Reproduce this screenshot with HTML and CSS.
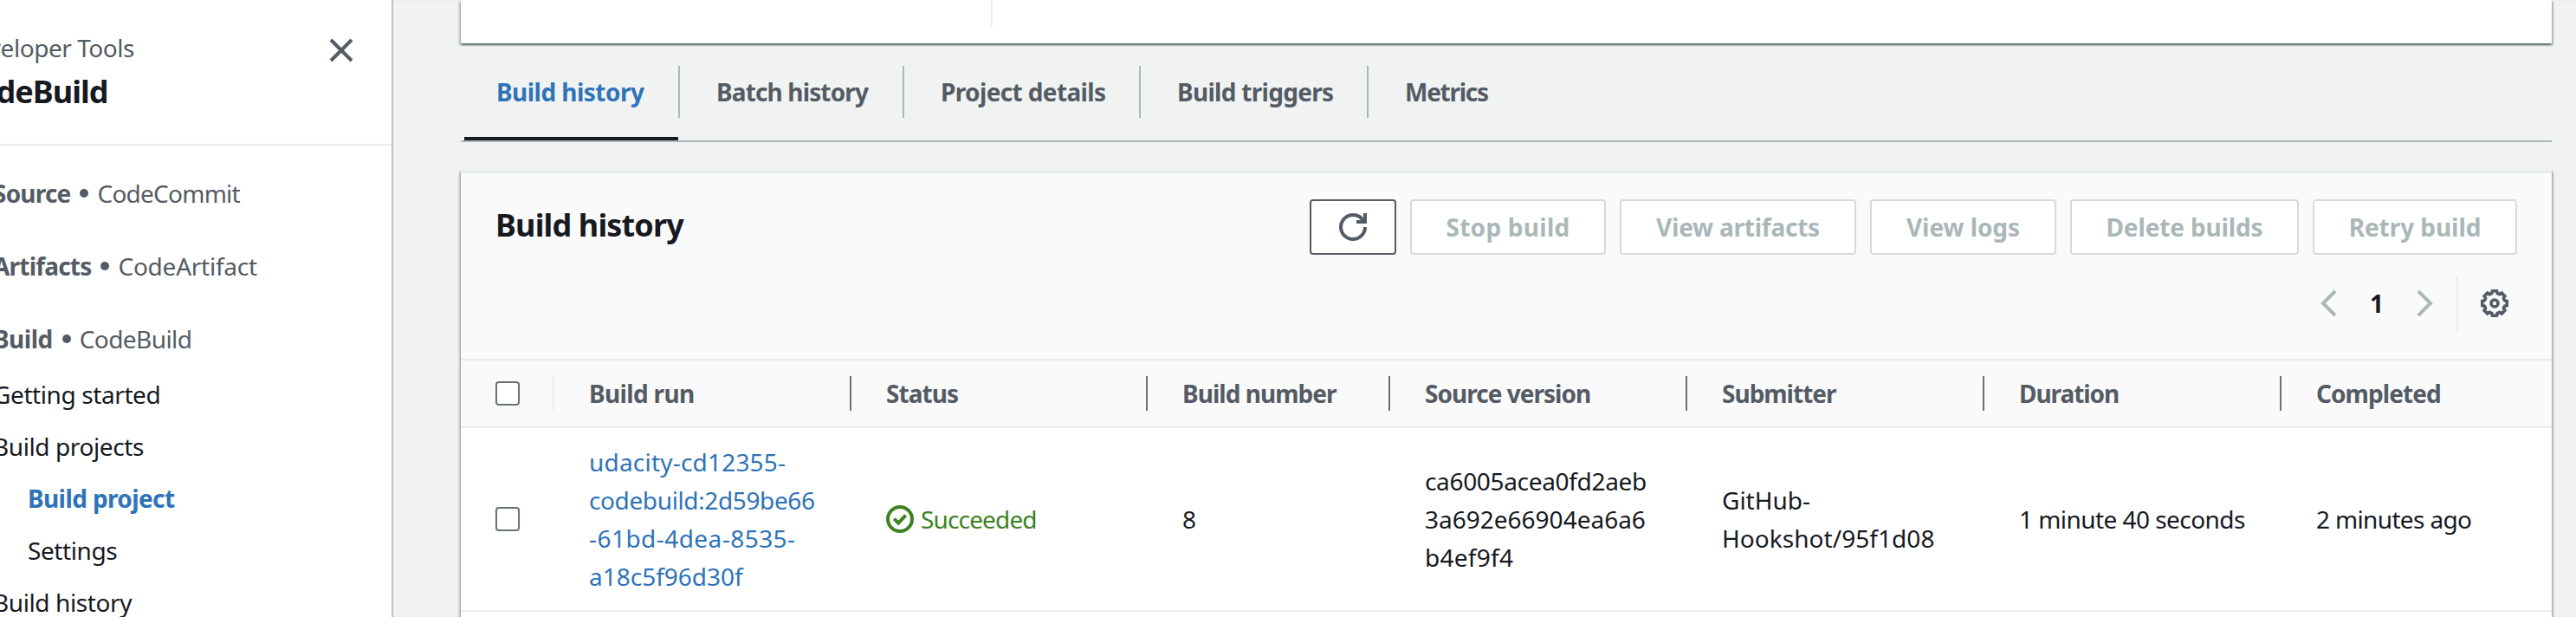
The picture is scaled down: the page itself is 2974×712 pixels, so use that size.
FILE: index.html
```html
<!DOCTYPE html>
<html lang="en">
<head>
<meta charset="utf-8">
<title>CodeBuild - Build history</title>
<link rel="stylesheet" href="styles.css">
</head>
<body>
<aside class="sidebar">
  <header class="side-head">
    <div class="side-titles">
      <p class="eyebrow">Developer Tools</p>
      <h1 class="service">CodeBuild</h1>
    </div>
    <svg class="close" viewBox="0 0 28 28"><path d="M2 2l24 24M26 2L2 26"/></svg>
  </header>
  <nav class="nav">
    <a class="section"><b>Source</b><i class="dot"></i><span class="sub-commit">CodeCommit</span></a>
    <a class="section"><b>Artifacts</b><i class="dot"></i><span class="sub-artifact">CodeArtifact</span></a>
    <a class="section"><b>Build</b><i class="dot"></i><span class="sub-build">CodeBuild</span></a>
    <a class="item">Getting started</a>
    <a class="item">Build projects</a>
    <a class="item nested active">Build project</a>
    <a class="item nested">Settings</a>
    <a class="item">Build history</a>
  </nav>
</aside>
<main class="main">
  <section class="summary"><div class="summary-col"></div></section>
  <nav class="tabs">
    <a class="tab tab-build selected"><span>Build history</span></a>
    <a class="tab tab-batch"><span>Batch history</span></a>
    <a class="tab tab-details"><span>Project details</span></a>
    <a class="tab tab-triggers"><span>Build triggers</span></a>
    <a class="tab tab-metrics"><span>Metrics</span></a>
  </nav>
  <section class="panel">
    <header class="panel-head">
      <div class="title-row">
        <h2 class="title">Build history</h2>
        <div class="actions">
          <button class="btn refresh"><svg class="icon" viewBox="0 0 16 16"><path d="M15 8c0 3.87-3.13 7-7 7s-7-3.13-7-7 3.13-7 7-7c2.79 0 5.2 1.64 6.3 4M15 0v5h-5"/></svg></button>
          <button class="btn stop">Stop build</button>
          <button class="btn artifacts">View artifacts</button>
          <button class="btn logs">View logs</button>
          <button class="btn delete">Delete builds</button>
          <button class="btn retry">Retry build</button>
        </div>
      </div>
      <div class="pager">
        <svg class="icon chevron" viewBox="0 0 16 16"><path d="M12 1L5 8l7 7"/></svg>
        <span class="page">1</span>
        <svg class="icon chevron" viewBox="0 0 16 16"><path d="M4 1l7 7-7 7"/></svg>
        <div class="settings">
          <svg class="icon gear" viewBox="0 0 32 32"><path d="M30.300 13.500V18.500L27.600 19.200 26.400 21.900 27.900 24.300 24.300 27.900 21.900 26.400 19.200 27.600 18.500 30.300H13.500L12.800 27.600 10.100 26.400 7.700 27.900 4.100 24.300 5.600 21.900 4.400 19.200 1.700 18.500V13.500L4.400 12.800 5.600 10.100 4.100 7.700 7.700 4.100 10.100 5.600 12.800 4.400 13.500 1.700H18.500L19.200 4.400 21.900 5.600 24.300 4.100 27.900 7.700 26.400 10.100 27.600 12.800z"/><circle cx="16" cy="16" r="4"/></svg>
        </div>
      </div>
    </header>
    <div class="row head">
      <div class="cell check"><span class="box"></span></div>
      <div class="cell h-run">Build run</div>
      <div class="cell h-status">Status</div>
      <div class="cell h-number">Build number</div>
      <div class="cell h-source">Source version</div>
      <div class="cell h-submitter">Submitter</div>
      <div class="cell h-duration">Duration</div>
      <div class="cell h-completed">Completed</div>
    </div>
    <div class="row body">
      <div class="cell check"><span class="box"></span></div>
      <div class="cell run"><a><span class="run-a">udacity-cd12355-</span><br><span class="run-b">codebuild:2d59be66</span><br><span class="run-c">-61bd-4dea-8535-</span><br>a18c5f96d30f</a></div>
      <div class="cell status"><svg class="icon" viewBox="0 0 16 16"><circle cx="8" cy="8" r="7"/><path d="M4.600 7.800l2.500 2.500 4.200-4.500"/></svg><span>Succeeded</span></div>
      <div class="cell">8</div>
      <div class="cell"><div><span class="src-a">ca6005acea0fd2aeb</span><br>3a692e66904ea6a6<br><span class="src-c">b4ef9f4</span></div></div>
      <div class="cell"><div>GitHub-<br><span class="hook">Hookshot/95f1d08</span></div></div>
      <div class="cell duration">1 minute 40 seconds</div>
      <div class="cell completed">2 minutes ago</div>
    </div>
  </section>
</main>
</body>
</html>
```
FILE: styles.css
```css
* { box-sizing: border-box; }
html { overflow: hidden; }
body {
  margin: 0;
  display: flex;
  width: 2974px;
  height: 712px;
  overflow: hidden;
  background: #f1f3f3;
  color: #16191f;
  font: 28px/44px "Noto Sans", "Open Sans", sans-serif;
}
p, h1, h2 { margin: 0; }
svg { fill: none; flex: none; }
.icon { width: 32px; height: 32px; stroke: #545b64; stroke-width: 2; }

/* Side navigation */
.sidebar {
  flex: none;
  width: 452px;
  height: 712px;
  background: #fff;
  overflow: hidden;
}
.sidebar + .main { box-shadow: inset 2px 0 1px #b9c0c3; }
.side-head {
  display: flex;
  justify-content: space-between;
  height: 168px;
  padding: 33px 44px 0 0;
  border-bottom: 2px solid #eaeded;
}
.side-titles { margin-left: -48px; white-space: nowrap; }
.eyebrow { color: #545b64; letter-spacing: -.45px; }
.service { margin-top: 7px; font-size: 36px; line-height: 44px; letter-spacing: -1px; }
.close { width: 28px; height: 28px; margin-top: 11px; stroke: #545b64; stroke-width: 4; }
.nav {
  display: flex;
  flex-direction: column;
  padding-top: 33px;
  margin-left: -8px;
  white-space: nowrap;
}
.section {
  display: flex;
  align-items: center;
  margin-bottom: 40px;
  color: #545b64;
}
.section b { letter-spacing: -.8px; }
.section:nth-child(3) { margin-bottom: 20px; }
.section:nth-child(3) b { letter-spacing: -.5px; }
.dot { width: 10px; height: 10px; margin: 0 10px 0 11px; border-radius: 50%; background: #545b64; }
.sub-commit { letter-spacing: -.75px; }
.sub-artifact { letter-spacing: -.25px; }
.sub-build { letter-spacing: -.58px; }
.item { margin-bottom: 16px; letter-spacing: -.4px; }
.nested { margin-left: 40px; }
.active { color: #2e73b8; font-weight: 700; letter-spacing: -.6px; }

/* Content column */
.main {
  flex: 1;
  display: flex;
  flex-direction: column;
  height: 712px;
  padding: 0 28px 0 80px;
}
.summary {
  flex: none;
  height: 50px;
  padding-left: 612px;
  background: #fff;
  box-shadow: 0 2px 2px rgba(0, 28, 36, .4), 2px 2px 2px rgba(0, 28, 36, .22), -2px 2px 2px rgba(0, 28, 36, .22);
}
.summary-col { width: 2px; height: 30px; background: #eaeded; }

.tabs {
  flex: none;
  display: flex;
  height: 114px;
  padding-left: 4px;
  border-bottom: 2px solid #aab7b8;
  color: #545b64;
  font-weight: 700;
}
.tab { padding-top: 26px; line-height: 60px; }
.tab span { display: block; height: 60px; padding-left: 42px; border-right: 2px solid #aab7b8; }
.tab-build { width: 249px; letter-spacing: -.53px; }
.tab-batch { width: 259px; letter-spacing: -.86px; }
.tab-details { width: 273px; letter-spacing: -.63px; }
.tab-triggers { width: 263px; letter-spacing: -.71px; }
.tab-metrics { letter-spacing: -1.27px; }
.tab-build span { padding-left: 37px; }
.tab-metrics span { border-right: 0; }
.selected {
  color: #2e73b8;
  background: linear-gradient(#16191f, #16191f) 0 100% / 247px 4px no-repeat;
}

/* Build history panel */
.panel {
  flex: 1;
  min-height: 0;
  margin-top: 32px;
  border-top: 4px solid #eaeded;
  background: #fff;
  box-shadow: 0 2px 2px rgba(0, 28, 36, .4), 2px 2px 2px rgba(0, 28, 36, .22), -2px 2px 2px rgba(0, 28, 36, .22);
}
.panel-head {
  height: 216px;
  padding: 30px 40px 0;
  border-bottom: 2px solid #eaeded;
  background: #fafafa;
}
.title-row { display: flex; justify-content: space-between; }
.title { font-size: 36px; line-height: 60px; letter-spacing: -.85px; }
.actions { display: flex; gap: 16px; }
.btn {
  display: flex;
  align-items: center;
  justify-content: center;
  height: 64px;
  padding: 0;
  border: 2px solid #d5dbdb;
  border-radius: 4px;
  background: #fff;
  color: #aab7b8;
  font: 700 28px/60px "Noto Sans", "Open Sans", sans-serif;
}
.refresh { width: 100px; border-color: #545b64; }
.stop { width: 226px; letter-spacing: .26px; }
.artifacts { width: 273px; letter-spacing: -.23px; }
.logs { width: 215px; letter-spacing: -.06px; }
.delete { width: 264px; letter-spacing: -.14px; }
.retry { width: 236px; letter-spacing: -.06px; }

.pager {
  display: flex;
  align-items: center;
  justify-content: flex-end;
  height: 64px;
  margin-top: 24px;
}
.chevron { stroke: #aab7b8; }
.page { width: 80px; text-align: center; font-weight: 700; }
.settings {
  display: flex;
  align-items: center;
  height: 64px;
  margin-left: 20px;
  padding: 0 10px 0 26px;
  border-left: 2px solid #eaeded;
}
.gear { stroke-width: 3.6; }

/* Builds table */
.row {
  display: grid;
  grid-template-columns: 108px 343px 342px 280px 343px 343px 343px 1fr;
  align-items: center;
  border-bottom: 2px solid #eaeded;
}
.cell { display: flex; align-items: center; padding-left: 40px; white-space: nowrap; }
.head {
  height: 78px;
  background: #fafafa;
  color: #545b64;
  font-weight: 700;
}
.head .cell { height: 40px; border-right: 2px solid #687078; }
.head .check { border-color: #eaeded; }
.head .cell:last-child { border-right: 0; }
.body { height: 212px; }
.box {
  width: 28px;
  height: 28px;
  border: 2px solid #687078;
  border-radius: 4px;
  background: #fff;
}
.h-run { letter-spacing: -.65px; }
.h-status { letter-spacing: -.94px; }
.h-number { letter-spacing: -.97px; }
.h-source { letter-spacing: -.98px; }
.h-submitter { letter-spacing: -1px; }
.h-duration { letter-spacing: -1.06px; }
.h-completed { letter-spacing: -.93px; }
.run { color: #2e73b8; }
.run-a { letter-spacing: .2px; }
.run-b { letter-spacing: -.38px; }
.run-c { letter-spacing: .45px; }
.status { gap: 8px; color: #3c821e; letter-spacing: -.85px; }
.status .icon { stroke: #3c821e; }
.src-a { letter-spacing: -.33px; }
.src-c { letter-spacing: .28px; }
.hook { letter-spacing: .05px; }
.duration { letter-spacing: -.55px; }
.completed { letter-spacing: -.65px; }
```
